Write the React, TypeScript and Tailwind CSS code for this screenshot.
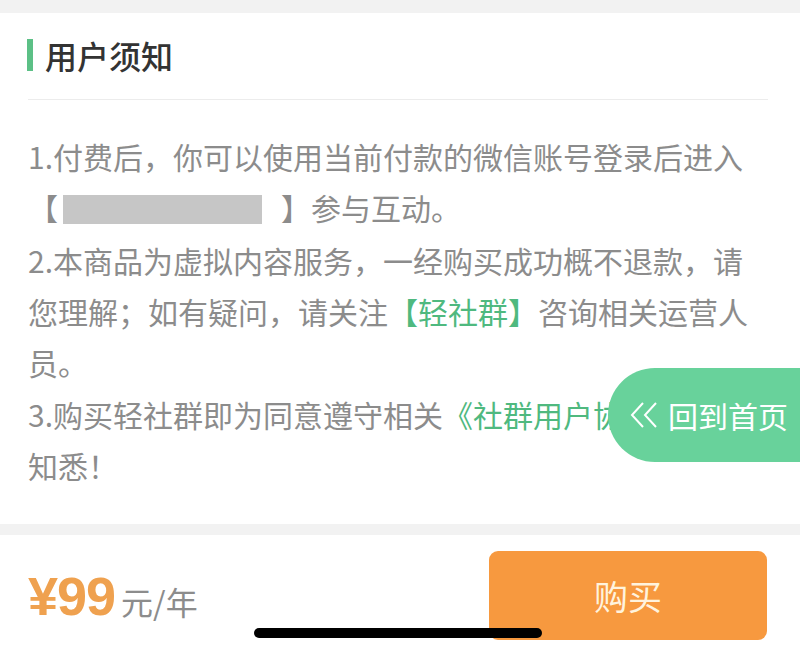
const lines = "block whitespace-nowrap";

export default function App() {
  return (
    <div className="relative w-[800px] h-[656px] overflow-hidden bg-[#f2f2f2] font-['Noto_Sans_CJK_SC',sans-serif]">
      <div className="mt-[13px] h-[511px] overflow-hidden bg-white px-[28px] pt-[26px]">
        <div className="flex h-[32px] items-center">
          <span className="h-[32px] w-[6px] -ml-px bg-[#5cc086]" />
          <h2 className="ml-[12px] text-[32px] font-medium leading-none text-[#333]">用户须知</h2>
        </div>
        <div className="mr-[4px] mt-[28px] h-px bg-[#ececec]" />
        <div className="mt-[31px] text-[30px] leading-[51px] text-[#8c8c8c]">
          <span className={lines}>1.付费后，你可以使用当前付款的微信账号登录后进入</span>
          <span className={lines}>
            【<span className="ml-[5px] mr-[19px] inline-block h-[29px] w-[199px] bg-[#c6c6c6] align-[-4px]" />】参与互动。
          </span>
          <span className={`${lines} mt-[2px]`}>2.本商品为虚拟内容服务，一经购买成功概不退款，请</span>
          <span className={lines}>
            您理解；如有疑问，请关注<span className="text-[#4fb97f]">【轻社群】</span>咨询相关运营人
          </span>
          <span className={lines}>员。</span>
          {/* the end of this line sits under the floating button */}
          <span className={`${lines} mt-[1px]`}>
            3.购买轻社群即为同意遵守相关<span className="text-[#4fb97f]">《社群用户协议》</span>，请
          </span>
          <span className={lines}>知悉！</span>
        </div>
      </div>

      <div className="mt-[11px] flex h-[121px] items-start bg-white pl-[28px] pr-[33px] pt-[16px]">
        <div className="flex h-[89px] flex-1 items-center">
          <span className="font-['Liberation_Sans',sans-serif] text-[54px] font-bold leading-none tracking-[-1px] text-[#efa14f]">¥99</span>
          <span className="ml-[6px] mt-[10px] text-[32px] leading-none text-[#8c8c8c]">元/年</span>
        </div>
        <button className="flex h-[89px] w-[278px] items-center justify-center rounded-[9px] bg-[#f7993f] text-[34px] text-[#fff3dd]">
          购买
        </button>
      </div>

      <div className="absolute left-[608px] top-[368px] flex h-[94px] w-[210px] items-center rounded-l-full bg-[#68d29b] pl-[22px] text-white">
        <svg width="28" height="26" viewBox="0 0 28 26" fill="none" stroke="currentColor" strokeWidth="2" strokeLinejoin="miter">
          <path d="M13 1 L2 13 L13 25" />
          <path d="M26 1 L15 13 L26 25" />
        </svg>
        <span className="ml-[10px] text-[30px] leading-none">回到首页</span>
      </div>

      <div className="absolute left-[254px] top-[628px] h-[10px] w-[288px] rounded-full bg-black" />
    </div>
  );
}
